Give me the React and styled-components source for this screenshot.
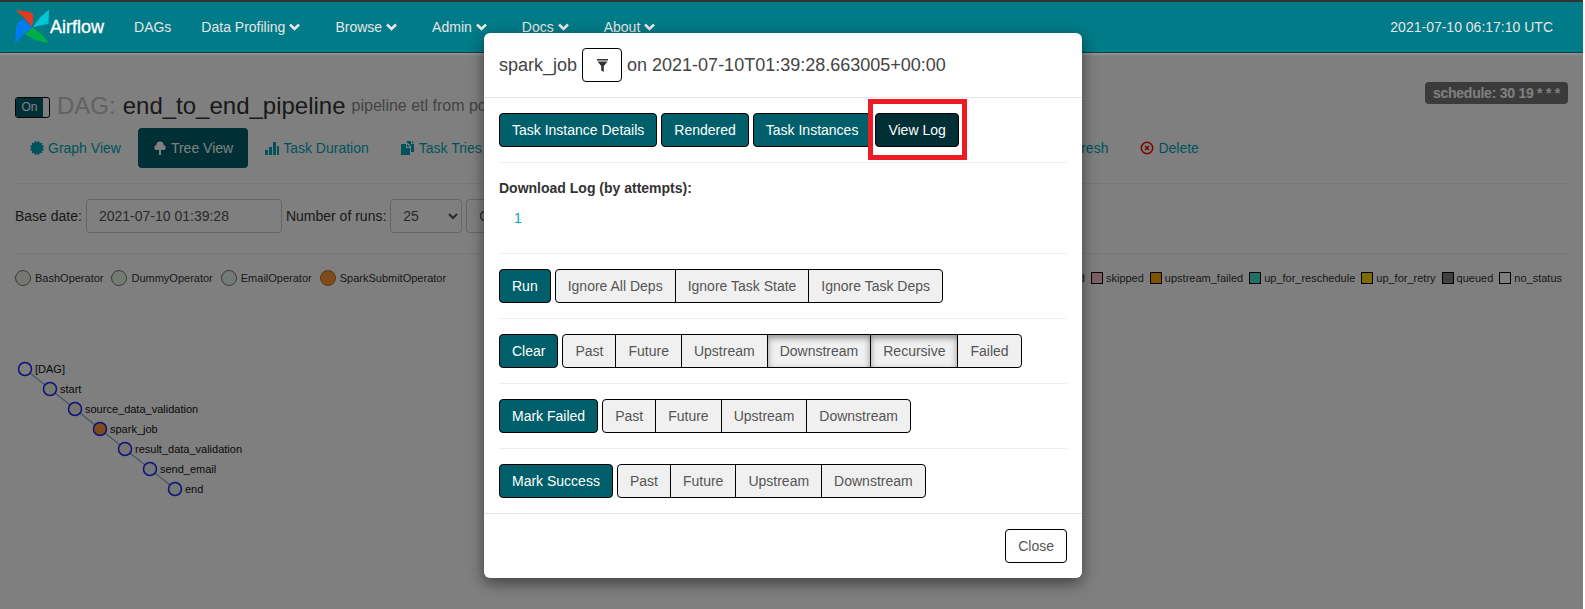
import React from "react";
import styled, { createGlobalStyle } from "styled-components";
import {
  FaCertificate,
  FaAlignLeft,
  FaClock,
  FaList,
  FaCode,
  FaPlay,
  FaSyncAlt,
} from "react-icons/fa";

const GlobalStyle = createGlobalStyle`
  html, body {
    margin: 0;
    height: 100%;
    overflow: hidden;
    background: #fff;
    font-family: "Liberation Sans", Arial, sans-serif;
    font-size: 14px;
    line-height: 20px;
    color: #333;
  }
  * {
    box-sizing: border-box;
  }
`;

const Page = styled.div`
  position: relative;
  width: 1583px;
  height: 609px;
  overflow: hidden;
`;

const Backdrop = styled.div`
  position: absolute;
  inset: 0;
  z-index: 1;
  background: rgba(0, 0, 0, 0.5);
`;

const Navbar = styled.nav`
  position: relative;
  z-index: 2;
  display: flex;
  align-items: center;
  height: 53px;
  padding: 0 30px 0 15px;
  background: #017b87;
  border-top: 2px solid #333;
  border-bottom: 1px solid #0e3f45;
  box-shadow: 0 1px 3px rgba(255, 255, 255, 0.25);
  color: #e6e6e6;
`;

const Brand = styled.a`
  display: flex;
  align-items: center;
  margin-right: 15px;
  color: #fff;
  font-size: 18px;
  -webkit-text-stroke: 0.3px #fff;
`;

const NavLink = styled.a`
  display: inline-flex;
  align-items: center;
  gap: 4px;
  padding: 0 15px;
  margin-right: ${(p) => (p.$menu ? "5px" : "0")};
`;

const NavClock = styled.span`
  margin-left: auto;
`;

const Content = styled.main`
  padding: 0 15px;
`;

const TitleRow = styled.div`
  display: flex;
  justify-content: space-between;
  align-items: flex-start;
  padding-top: 29px;
  height: 75px;
`;

const Heading = styled.div`
  display: flex;
  align-items: center;
  height: 36px;
  padding-top: 11px;
`;

const Toggle = styled.span`
  display: flex;
  width: 35px;
  height: 21px;
  margin: 4px 7px 0 0;
  border: 1px solid #000;
  border-radius: 3px;
  background: #fff;
  overflow: hidden;
`;

const ToggleOn = styled.span`
  width: 27px;
  background: #005f6a;
  color: #fff;
  font-size: 12px;
  line-height: 19px;
  text-align: center;
`;

const DagPrefix = styled.span`
  font-size: 24px;
  color: #c4c4c4;
  margin-right: 7px;
`;

const DagName = styled.span`
  font-size: 24px;
  color: #333;
  margin-right: 6px;
`;

const DagInfo = styled.span`
  font-size: 16px;
  color: #888;
  white-space: nowrap;
`;

const ScheduleBadge = styled.span`
  height: 22px;
  padding: 0 8px;
  border-radius: 4px;
  background: #777;
  color: #fff;
  font-size: 14px;
  font-weight: bold;
  letter-spacing: -0.25px;
  line-height: 22px;
`;

const Tabs = styled.div`
  display: flex;
  gap: 2px;
  height: 40px;
`;

const Tab = styled.a`
  display: inline-flex;
  align-items: center;
  gap: 4px;
  margin-left: ${(p) => p.$pull || 0}px;
  padding: 0 15px;
  border-radius: 4px;
  white-space: nowrap;
  background: ${(p) => (p.$active ? "#005f6a" : "transparent")};
  color: ${(p) => (p.$active ? "#fff" : "#00a7b8")};
  svg {
    width: 14px;
    height: 14px;
    flex: none;
  }
`;

const Rule = styled.hr`
  height: 1px;
  margin: ${(p) => (p.$flush ? "0" : "15px 0")};
  border: 0;
  background: #eee;
`;

const FilterForm = styled.div`
  display: flex;
  align-items: center;
  gap: 4px;
  height: 34px;
  margin-bottom: 20px;
  color: #333;
`;

const DateInput = styled.input`
  width: 196px;
  height: 34px;
  padding: 6px 12px;
  border: 1px solid #ccc;
  border-radius: 4px;
  background: transparent;
  color: #555;
  font: inherit;
`;

const RunsSelect = styled.select`
  width: 72px;
  height: 34px;
  padding: 6px 8px;
  border: 1px solid #ccc;
  border-radius: 4px;
  background: #fff;
  color: #555;
  font: inherit;
`;

const GoButton = styled.button`
  height: 34px;
  padding: 6px 12px;
  border: 1px solid #ccc;
  border-radius: 4px;
  background: #fff;
  color: #555;
  font: inherit;
`;

const LegendRow = styled.div`
  display: flex;
  justify-content: space-between;
  align-items: center;
  height: 16px;
  margin-top: 16px;
  font-size: 11px;
  color: #333;
`;

const LegendGroup = styled.div`
  display: flex;
  align-items: center;
  gap: ${(p) => p.$gap}px;
`;

const LegendItem = styled.span`
  display: inline-flex;
  align-items: center;
  gap: ${(p) => p.$gap}px;
`;

const OperatorDot = styled.span`
  width: 16px;
  height: 16px;
  border: 1px solid ${(p) => p.$edge};
  border-radius: 50%;
  background: ${(p) => p.$color};
`;

const StateSwatch = styled.span`
  width: 12px;
  height: 12px;
  border: 1px solid #000;
  background: ${(p) => p.$color};
`;

const TreeChart = styled.svg`
  display: block;
  margin: 64px 0 0 -15px;
  font-size: 11px;
  fill: #111;
`;

const Modal = styled.div`
  position: absolute;
  top: 33px;
  left: 484px;
  z-index: 3;
  width: 598px;
  border-radius: 6px;
  background: #fff;
  box-shadow: 0 5px 15px rgba(0, 0, 0, 0.5);
  color: #333;
`;

const ModalHeader = styled.div`
  display: flex;
  align-items: center;
  gap: 5px;
  padding: 15px;
  border-bottom: 1px solid #e5e5e5;
  font-size: 18px;
  color: #444;
`;

const FilterButton = styled.button`
  display: flex;
  align-items: center;
  justify-content: center;
  width: 40px;
  height: 34px;
  padding: 0;
  border: 1px solid #000;
  border-radius: 4px;
  background: #fff;
`;

const ModalBody = styled.div`
  padding: 15px;
`;

const ButtonRow = styled.div`
  display: flex;
  gap: 4px;
`;

const PrimaryButton = styled.button`
  position: relative;
  height: 34px;
  padding: 6px 12px;
  border: 1px solid #000;
  border-radius: 4px;
  background: ${(p) => (p.$dark ? "#002f35" : "#005f6a")};
  color: #fff;
  font: inherit;
  white-space: nowrap;
`;

const Highlight = styled.span`
  position: absolute;
  top: -15px;
  left: -8px;
  width: 99px;
  height: 61px;
  border: 5px solid #ed1c24;
  pointer-events: none;
`;

const ButtonGroup = styled.div`
  display: flex;
`;

const SegmentButton = styled.button`
  height: 34px;
  margin-left: -1px;
  padding: 6px 12px;
  border: 1px solid #000;
  background: #f0f0f0;
  color: #555;
  font: inherit;
  white-space: nowrap;
  box-shadow: ${(p) => (p.$active ? "inset 0 3px 6px rgba(0, 0, 0, 0.4)" : "none")};
  &:first-child {
    margin-left: 0;
    border-radius: 4px 0 0 4px;
  }
  &:last-child {
    border-radius: 0 4px 4px 0;
  }
`;

const DownloadLabel = styled.div`
  margin-bottom: 5px;
  font-weight: bold;
`;

const AttemptLink = styled.a`
  display: block;
  padding: 5px 15px;
  margin-bottom: 20px;
  color: #00a7b8;
`;

const ModalFooter = styled.div`
  display: flex;
  justify-content: flex-end;
  padding: 15px;
  border-top: 1px solid #e5e5e5;
`;

const CloseButton = styled.button`
  height: 34px;
  padding: 6px 12px;
  border: 1px solid #000;
  border-radius: 4px;
  background: #fff;
  color: #555;
  font: inherit;
`;

const PinwheelLogo = () => (
  <svg width="35" height="36" viewBox="0 0 36 36">
    <path d="M1 1 C8 1 15 2 18.5 4.5 C19 9 18.5 14 17.5 18 L10 9 Z" fill="#e43921" />
    <path d="M35 0 L34.5 15 C28 16 22 17 18 18.5 L26 8 Z" fill="#00c7d4" />
    <path d="M18 19 C22 21 26 24 28 26 L35 35 C26 33 16 30 10 25 Z" fill="#00ad46" />
    <path d="M0 35 L1 18 C2 14 6 11 9 10 L17.5 18.5 C13 22 6 28 0 35 Z" fill="#017cee" />
  </svg>
);

const ChevronDown = () => (
  <svg width="11" height="8" viewBox="0 0 11 8" fill="none" stroke="currentColor" strokeWidth="2.6">
    <path d="M1 1.5 L5.5 6 L10 1.5" />
  </svg>
);

const TreeIcon = () => (
  <svg viewBox="0 0 14 14" fill="currentColor">
    <circle cx="7" cy="4" r="3.6" />
    <circle cx="4" cy="6.5" r="2.6" />
    <circle cx="10" cy="6.5" r="2.6" />
    <path d="M6 7h2v7H6z" />
  </svg>
);

const SignalIcon = () => (
  <svg viewBox="0 0 14 14" fill="currentColor">
    <path d="M0 9h3v5H0zM4 6h3v8H4zM8 1h3v13H8zM12 5h2v9h-2z" />
  </svg>
);

const DuplicateIcon = () => (
  <svg viewBox="0 0 14 14" fill="currentColor">
    <path d="M0 3h5v4h4v7H0zM6 3l3 3H6z" />
    <path d="M6 0h4v3h3v8h-3V5L7 2H6zM11 0l2 2h-2z" />
  </svg>
);

const RemoveIcon = () => (
  <svg viewBox="0 0 14 14" fill="none" stroke="#ff0000">
    <circle cx="7" cy="7" r="5.7" strokeWidth="1.6" />
    <path d="M5 5l4 4M9 5l-4 4" strokeWidth="1.6" />
  </svg>
);

const FunnelIcon = () => (
  <svg width="11" height="13" viewBox="0 0 11 13" fill="#333">
    <path d="M0 0h11v1.5H0zM0.5 2.5h10L6.8 7v6L4.2 11.5V7z" />
  </svg>
);

const TABS = [
  { label: "Graph View", icon: <FaCertificate /> },
  { label: "Tree View", icon: <TreeIcon />, active: true },
  { label: "Task Duration", icon: <SignalIcon /> },
  { label: "Task Tries", icon: <DuplicateIcon /> },
  { label: "Landing Times", icon: <FaClock /> },
  { label: "Gantt", icon: <FaAlignLeft /> },
  { label: "Details", icon: <FaList /> },
  { label: "Code", icon: <FaCode /> },
  { label: "Trigger DAG", icon: <FaPlay /> },
  { label: "Refresh", icon: <FaSyncAlt />, pull: -2 },
  { label: "Delete", icon: <RemoveIcon /> },
];

const OPERATORS = [
  { name: "BashOperator", color: "#f0ede4", edge: "#777" },
  { name: "DummyOperator", color: "#e8f7e4", edge: "#777" },
  { name: "EmailOperator", color: "#e6f1f2", edge: "#777" },
  { name: "SparkSubmitOperator", color: "#ff9933", edge: "#c76a1e" },
];

const STATES = [
  { name: "success", color: "#008000" },
  { name: "running", color: "#00ff00" },
  { name: "failed", color: "#ff0000" },
  { name: "skipped", color: "#ffc0cb" },
  { name: "upstream_failed", color: "#ffa500" },
  { name: "up_for_reschedule", color: "#40e0d0" },
  { name: "up_for_retry", color: "#ffd700" },
  { name: "queued", color: "#808080" },
  { name: "no_status", color: "#fff" },
];

const TREE = [
  { name: "[DAG]", fill: "#fff" },
  { name: "start", fill: "#e8f7e4" },
  { name: "source_data_validation", fill: "#f0ede4" },
  { name: "spark_job", fill: "#ff9933" },
  { name: "result_data_validation", fill: "#f0ede4" },
  { name: "send_email", fill: "#e6f1f2" },
  { name: "end", fill: "#e8f7e4" },
];

const ACTIONS = [
  {
    label: "Run",
    options: [{ label: "Ignore All Deps" }, { label: "Ignore Task State" }, { label: "Ignore Task Deps" }],
  },
  {
    label: "Clear",
    options: [
      { label: "Past" },
      { label: "Future" },
      { label: "Upstream" },
      { label: "Downstream", active: true },
      { label: "Recursive", active: true },
      { label: "Failed" },
    ],
  },
  {
    label: "Mark Failed",
    options: [{ label: "Past" }, { label: "Future" }, { label: "Upstream" }, { label: "Downstream" }],
  },
  {
    label: "Mark Success",
    options: [{ label: "Past" }, { label: "Future" }, { label: "Upstream" }, { label: "Downstream" }],
  },
];

function App() {
  return (
    <Page>
      <GlobalStyle />
      <Navbar>
        <Brand>
          <PinwheelLogo />
          Airflow
        </Brand>
        <NavLink>DAGs</NavLink>
        {["Data Profiling", "Browse", "Admin", "Docs", "About"].map((item) => (
          <NavLink key={item} $menu>
            {item}
            <ChevronDown />
          </NavLink>
        ))}
        <NavClock>2021-07-10 06:17:10 UTC</NavClock>
      </Navbar>

      <Content>
        <TitleRow>
          <Heading>
            <Toggle>
              <ToggleOn>On</ToggleOn>
            </Toggle>
            <DagPrefix>DAG:</DagPrefix>
            <DagName>end_to_end_pipeline</DagName>
            <DagInfo>pipeline etl from postgres</DagInfo>
          </Heading>
          <ScheduleBadge>schedule: 30 19 * * *</ScheduleBadge>
        </TitleRow>

        <Tabs>
          {TABS.map((tab) => (
            <Tab key={tab.label} $active={tab.active} $pull={tab.pull}>
              {tab.icon}
              {tab.label}
            </Tab>
          ))}
        </Tabs>

        <Rule />

        <FilterForm>
          Base date:
          <DateInput readOnly value="2021-07-10 01:39:28" />
          Number of runs:
          <RunsSelect defaultValue="25">
            <option>25</option>
          </RunsSelect>
          <GoButton>Go</GoButton>
        </FilterForm>

        <Rule $flush />

        <LegendRow>
          <LegendGroup $gap={8}>
            {OPERATORS.map((op) => (
              <LegendItem key={op.name} $gap={4}>
                <OperatorDot $color={op.color} $edge={op.edge} />
                {op.name}
              </LegendItem>
            ))}
          </LegendGroup>
          <LegendGroup $gap={6}>
            {STATES.map((state) => (
              <LegendItem key={state.name} $gap={3}>
                <StateSwatch $color={state.color} />
                {state.name}
              </LegendItem>
            ))}
            <span />
          </LegendGroup>
        </LegendRow>

        <TreeChart width="300" height="150">
          <path d="M25 19 L175 139" stroke="#8fb4c8" strokeWidth="1.5" fill="none" />
          {TREE.map((node, i) => (
            <g key={node.name} transform={`translate(${25 + i * 25} ${19 + i * 20})`}>
              <circle r="6.5" fill={node.fill} stroke="#1f1fff" strokeWidth="1.5" />
              <text x="10" y="4">
                {node.name}
              </text>
            </g>
          ))}
        </TreeChart>
      </Content>

      <Backdrop />

      <Modal>
        <ModalHeader>
          spark_job
          <FilterButton>
            <FunnelIcon />
          </FilterButton>
          on 2021-07-10T01:39:28.663005+00:00
        </ModalHeader>
        <ModalBody>
          <ButtonRow>
            <PrimaryButton>Task Instance Details</PrimaryButton>
            <PrimaryButton>Rendered</PrimaryButton>
            <PrimaryButton>Task Instances</PrimaryButton>
            <PrimaryButton $dark>
              View Log
              <Highlight />
            </PrimaryButton>
          </ButtonRow>
          <Rule />
          <DownloadLabel>Download Log (by attempts):</DownloadLabel>
          <AttemptLink>1</AttemptLink>
          {ACTIONS.map((action) => (
            <React.Fragment key={action.label}>
              <Rule />
              <ButtonRow>
                <PrimaryButton>{action.label}</PrimaryButton>
                <ButtonGroup>
                  {action.options.map((option) => (
                    <SegmentButton key={option.label} $active={option.active}>
                      {option.label}
                    </SegmentButton>
                  ))}
                </ButtonGroup>
              </ButtonRow>
            </React.Fragment>
          ))}
        </ModalBody>
        <ModalFooter>
          <CloseButton>Close</CloseButton>
        </ModalFooter>
      </Modal>
    </Page>
  );
}

export default App;
